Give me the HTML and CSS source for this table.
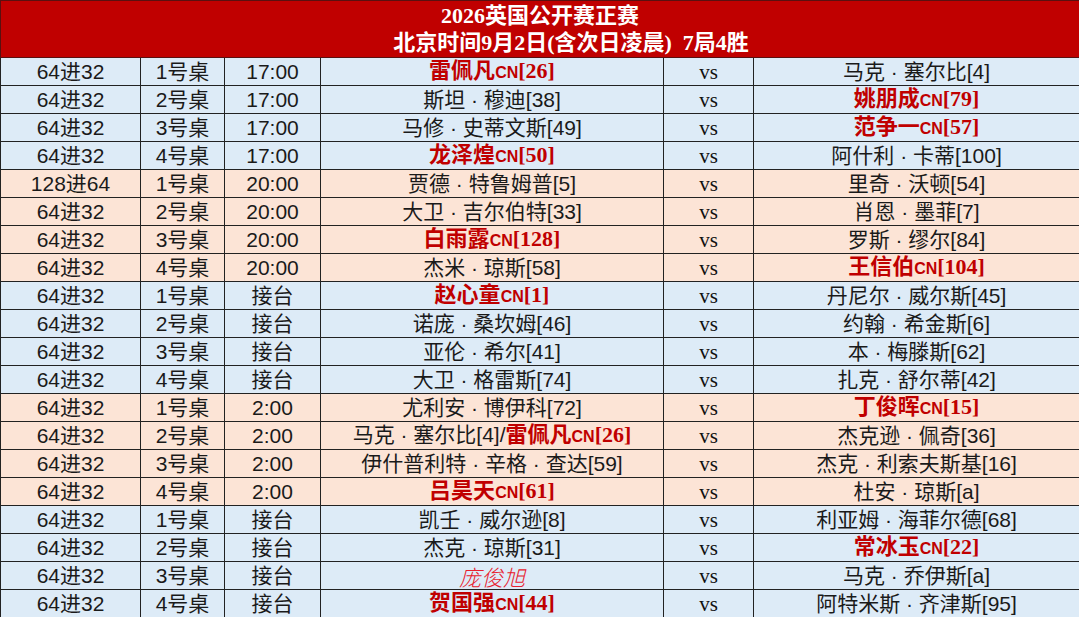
FILE: index.html
```html
<!DOCTYPE html>
<html lang="zh">
<head>
<meta charset="utf-8">
<title>2026英国公开赛正赛</title>
<link rel="stylesheet" href="styles.css">
</head>
<body>
<table class="sched">
  <colgroup>
    <col class="c-round"><col class="c-table"><col class="c-time"><col class="c-p1"><col class="c-vs"><col class="c-p2">
  </colgroup>
  <thead>
    <tr class="head">
      <th colspan="6">
        <div class="t1">2026英国公开赛正赛</div>
        <div class="t2">北京时间9月2日(含次日凌晨)&nbsp;&nbsp;7局4胜</div>
      </th>
    </tr>
  </thead>
  <tbody>
    <tr class="blue"><td>64进32</td><td>1号桌</td><td>17:00</td><td><span class="cn">雷佩凡<small>CN</small>[26]</span></td><td class="vs">vs</td><td>马克 · 塞尔比[4]</td></tr>
    <tr class="blue"><td>64进32</td><td>2号桌</td><td>17:00</td><td>斯坦 · 穆迪[38]</td><td class="vs">vs</td><td><span class="cn">姚朋成<small>CN</small>[79]</span></td></tr>
    <tr class="blue"><td>64进32</td><td>3号桌</td><td>17:00</td><td>马修 · 史蒂文斯[49]</td><td class="vs">vs</td><td><span class="cn">范争一<small>CN</small>[57]</span></td></tr>
    <tr class="blue"><td>64进32</td><td>4号桌</td><td>17:00</td><td><span class="cn">龙泽煌<small>CN</small>[50]</span></td><td class="vs">vs</td><td>阿什利 · 卡蒂[100]</td></tr>
    <tr class="peach"><td>128进64</td><td>1号桌</td><td>20:00</td><td>贾德 · 特鲁姆普[5]</td><td class="vs">vs</td><td>里奇 · 沃顿[54]</td></tr>
    <tr class="peach"><td>64进32</td><td>2号桌</td><td>20:00</td><td>大卫 · 吉尔伯特[33]</td><td class="vs">vs</td><td>肖恩 · 墨菲[7]</td></tr>
    <tr class="peach"><td>64进32</td><td>3号桌</td><td>20:00</td><td><span class="cn">白雨露<small>CN</small>[128]</span></td><td class="vs">vs</td><td>罗斯 · 缪尔[84]</td></tr>
    <tr class="peach"><td>64进32</td><td>4号桌</td><td>20:00</td><td>杰米 · 琼斯[58]</td><td class="vs">vs</td><td><span class="cn">王信伯<small>CN</small>[104]</span></td></tr>
    <tr class="blue"><td>64进32</td><td>1号桌</td><td>接台</td><td><span class="cn">赵心童<small>CN</small>[1]</span></td><td class="vs">vs</td><td>丹尼尔 · 威尔斯[45]</td></tr>
    <tr class="blue"><td>64进32</td><td>2号桌</td><td>接台</td><td>诺庞 · 桑坎姆[46]</td><td class="vs">vs</td><td>约翰 · 希金斯[6]</td></tr>
    <tr class="blue"><td>64进32</td><td>3号桌</td><td>接台</td><td>亚伦 · 希尔[41]</td><td class="vs">vs</td><td>本 · 梅滕斯[62]</td></tr>
    <tr class="blue"><td>64进32</td><td>4号桌</td><td>接台</td><td>大卫 · 格雷斯[74]</td><td class="vs">vs</td><td>扎克 · 舒尔蒂[42]</td></tr>
    <tr class="peach"><td>64进32</td><td>1号桌</td><td>2:00</td><td>尤利安 · 博伊科[72]</td><td class="vs">vs</td><td><span class="cn">丁俊晖<small>CN</small>[15]</span></td></tr>
    <tr class="peach"><td>64进32</td><td>2号桌</td><td>2:00</td><td>马克 · 塞尔比[4]/<span class="cn">雷佩凡<small>CN</small>[26]</span></td><td class="vs">vs</td><td>杰克逊 · 佩奇[36]</td></tr>
    <tr class="peach"><td>64进32</td><td>3号桌</td><td>2:00</td><td>伊什普利特 · 辛格 · 查达[59]</td><td class="vs">vs</td><td>杰克 · 利索夫斯基[16]</td></tr>
    <tr class="peach"><td>64进32</td><td>4号桌</td><td>2:00</td><td><span class="cn">吕昊天<small>CN</small>[61]</span></td><td class="vs">vs</td><td>杜安 · 琼斯[a]</td></tr>
    <tr class="blue"><td>64进32</td><td>1号桌</td><td>接台</td><td>凯壬 · 威尔逊[8]</td><td class="vs">vs</td><td>利亚姆 · 海菲尔德[68]</td></tr>
    <tr class="blue"><td>64进32</td><td>2号桌</td><td>接台</td><td>杰克 · 琼斯[31]</td><td class="vs">vs</td><td><span class="cn">常冰玉<small>CN</small>[22]</span></td></tr>
    <tr class="blue"><td>64进32</td><td>3号桌</td><td>接台</td><td><span class="tbd">庞俊旭</span></td><td class="vs">vs</td><td>马克 · 乔伊斯[a]</td></tr>
    <tr class="blue"><td>64进32</td><td>4号桌</td><td>接台</td><td><span class="cn">贺国强<small>CN</small>[44]</span></td><td class="vs">vs</td><td>阿特米斯 · 齐津斯[95]</td></tr>
  </tbody>
</table>
</body>
</html>
```

FILE: styles.css
```css
html, body {
  margin: 0;
  padding: 0;
  background: #ffffff;
}

.sched {
  width: 1079px;
  border-collapse: collapse;
  table-layout: fixed;
  font-family: "Liberation Sans", "Noto Sans CJK SC", sans-serif;
  font-size: 21px;
  color: #1a1a1a;
}

.c-round { width: 140px; }
.c-table { width: 84px; }
.c-time { width: 96px; }
.c-p1 { width: 343px; }
.c-vs { width: 90px; }
.c-p2 { width: 326px; }

.head th {
  background: #c00000;
  color: #ffffff;
  height: 56px;
  padding: 0;
  border: 1px solid #5a1010;
  font-family: "Liberation Serif", "Noto Sans CJK SC", serif;
  font-weight: bold;
  font-size: 22px;
  line-height: 27px;
  text-align: center;
}

.head .t2 {
  padding-left: 62px;
}

.sched td {
  height: 27px;
  padding: 0;
  border: 1px solid #222222;
  text-align: center;
  vertical-align: middle;
  line-height: 16px;
  white-space: nowrap;
}

.blue td { background: #ddebf7; }
.peach td { background: #fce4d6; }

.sched td.vs {
  font-family: "Liberation Serif", serif;
  font-size: 21px;
  color: #111111;
}

.cn {
  color: #c00000;
  font-family: "Liberation Serif", "Noto Sans CJK SC", serif;
  font-weight: bold;
  font-size: 22px;
  line-height: 16px;
}

.cn small {
  font-size: 16px;
  font-family: "Liberation Sans", sans-serif;
  font-weight: bold;
  line-height: 16px;
}

.tbd {
  display: inline-block;
  vertical-align: middle;
  color: #e8202e;
  font-style: italic;
  font-size: 22px;
  font-family: "Noto Sans CJK SC", sans-serif;
  font-weight: 300;
  line-height: 24px;
}
```
